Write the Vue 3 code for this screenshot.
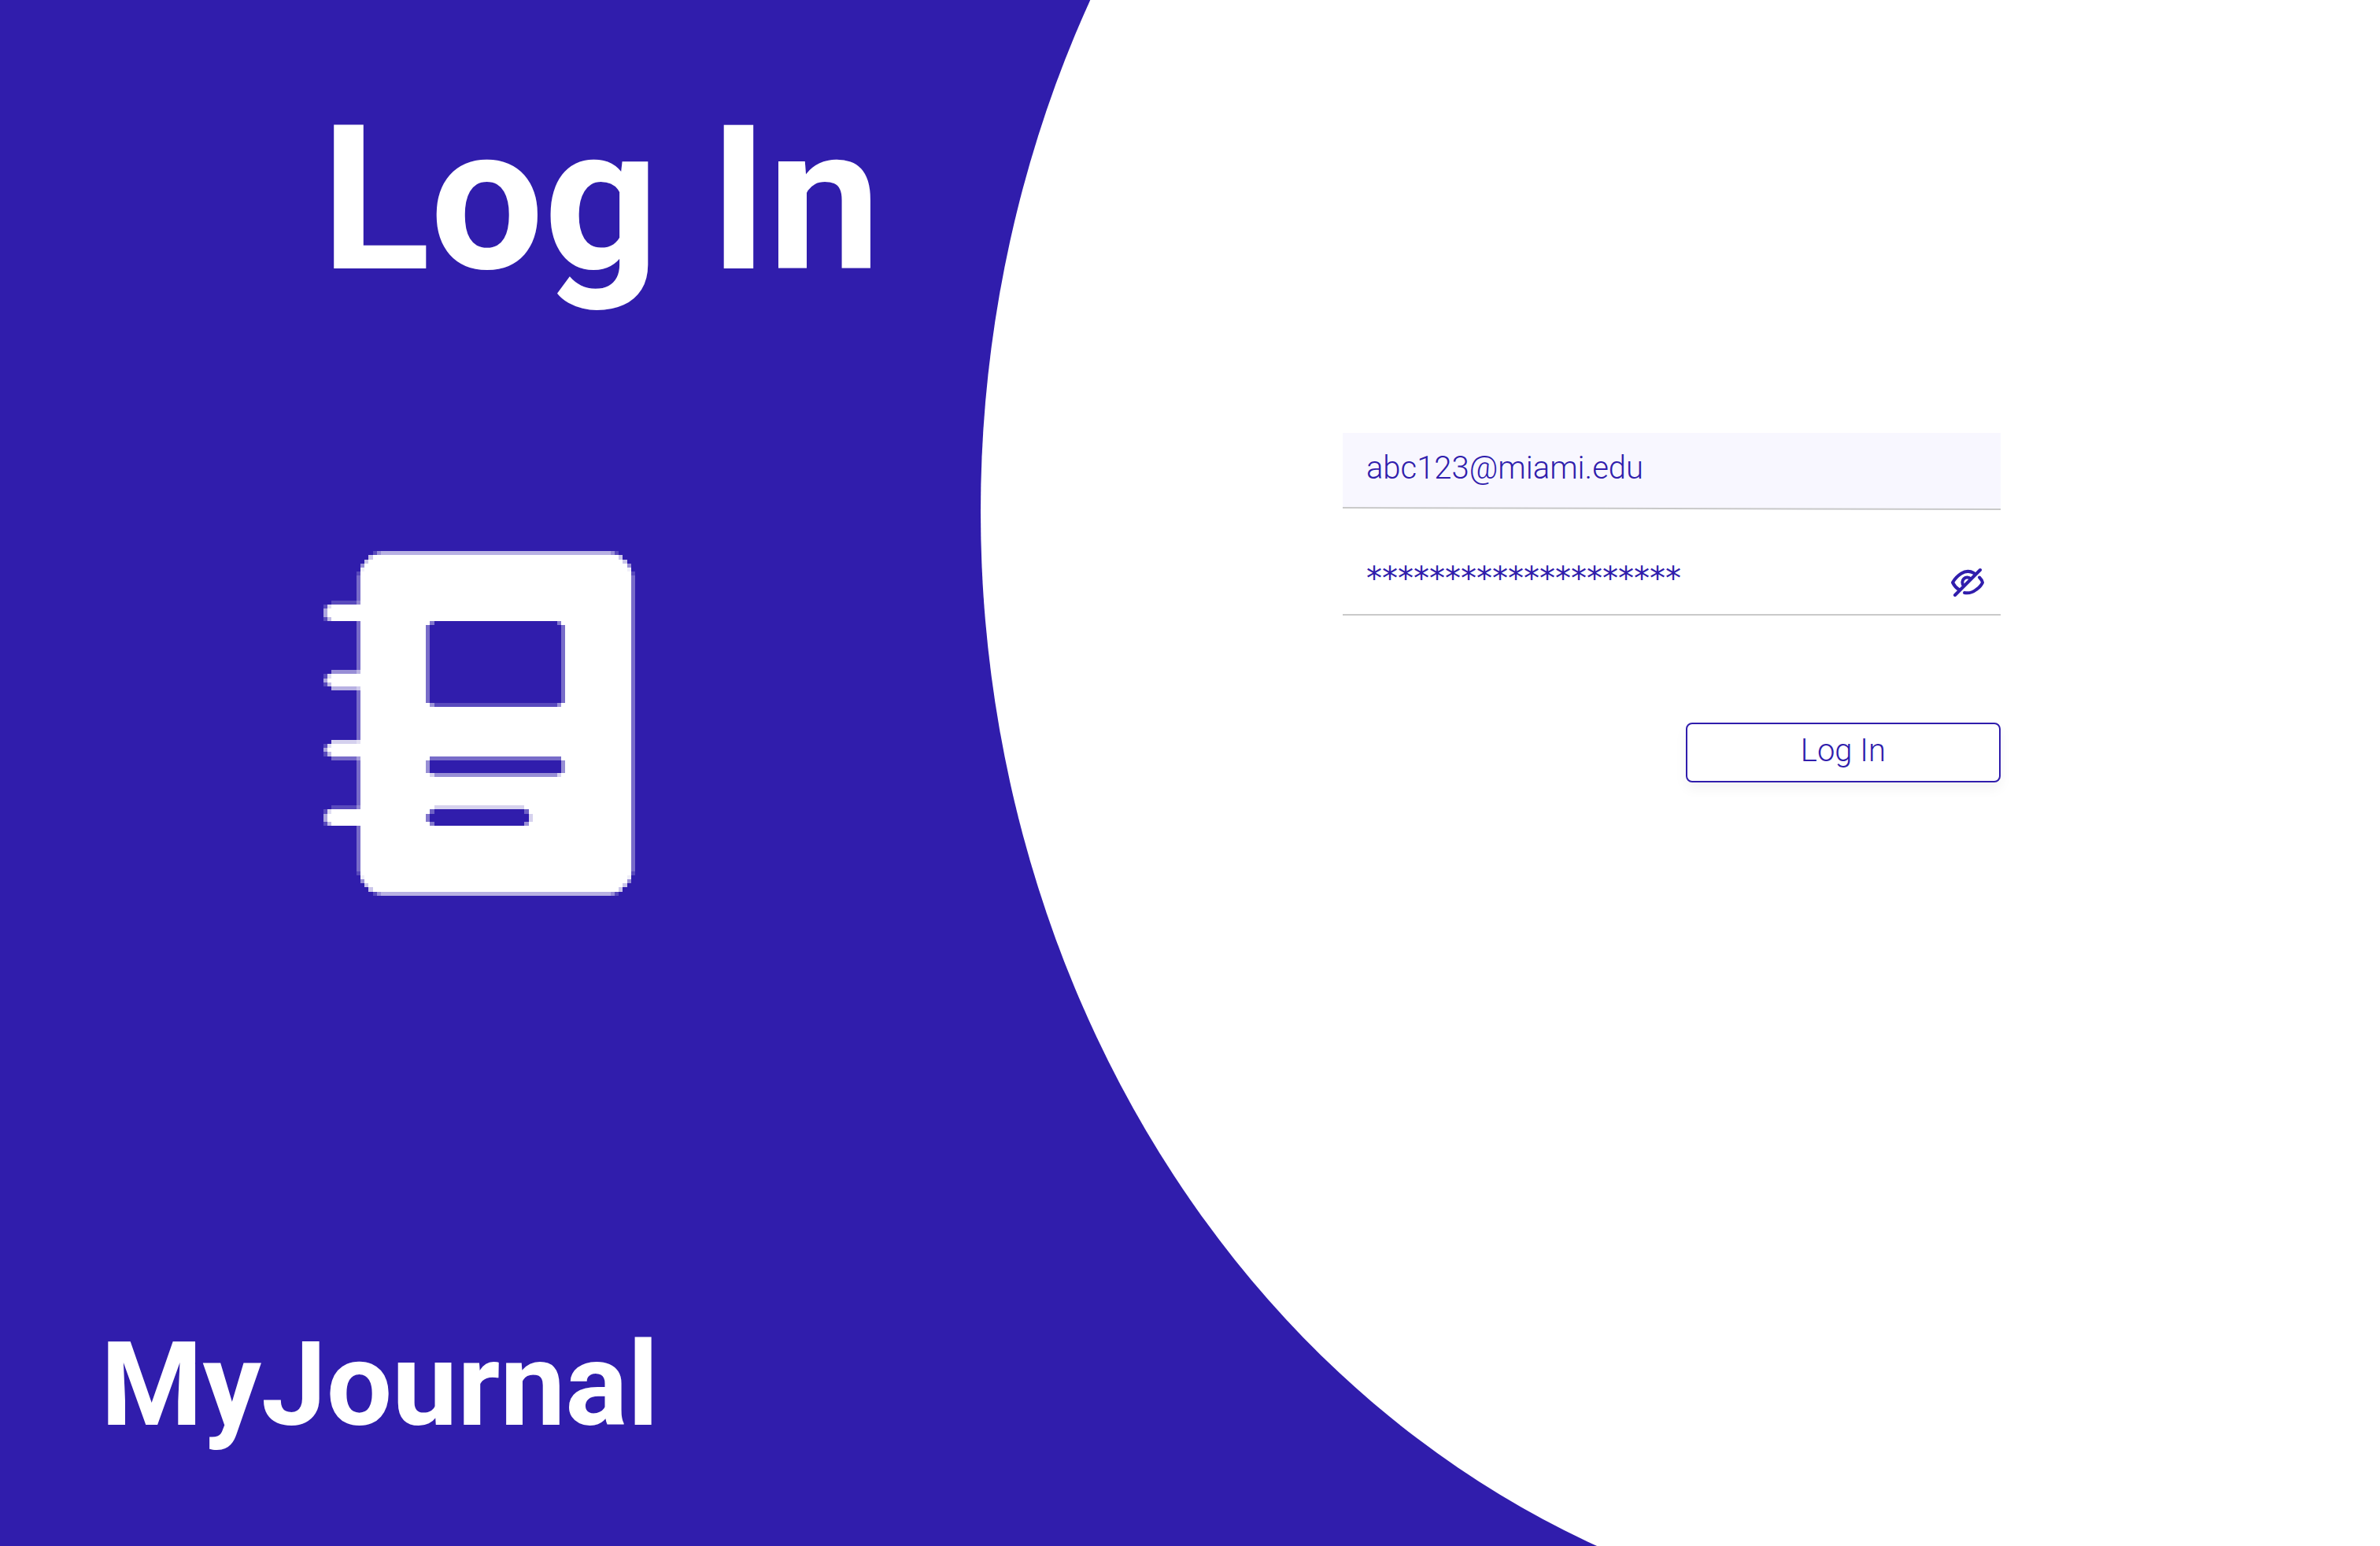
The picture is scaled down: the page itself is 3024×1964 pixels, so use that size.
<script setup>
import { ref } from 'vue'

const email = ref('abc123@miami.edu')
const password = ref('*'.repeat(20))

const WHITE = '#ffffff'
const BLUE = '#301dac'

// Spiral notebook on a 76 x 84 cell grid: [x, y, width, height, colour, opacity]
const cells = []
const put = (x, y, w, h, o = 1, c = WHITE) => cells.push([x, y, w, h, c, o])

// Cover
put(14, 0, 56, 1, 0.66)
put(14, 83, 56, 1, 0.66)
put(9, 5, 66, 74)
put(8, 6, 1, 72, 0.35)
put(75, 6, 1, 72, 0.35)

// Rounded corners of the cover, mirrored in both directions
const corner = [
  [13, 0, 1, 0.5], [12, 0, 1, 0.2],
  [12, 1, 30, 1], [11, 1, 1, 0.75],
  [11, 2, 31, 1], [10, 2, 1, 0.75],
  [10, 3, 32, 1], [9, 3, 1, 0.5],
  [10, 4, 32, 1], [9, 4, 1, 0.93],
  [8, 5, 1, 0.2],
]
for (const [x, y, w, o] of corner) {
  put(x, y, w, 1, o)
  put(84 - x - w, y, w, 1, o)
  put(x, 83 - y, w, 1, o)
  put(84 - x - w, 83 - y, w, 1, o)
}

// Rings: first row, opacity of first and last row, number of solid rows
for (const [y, top, bottom, rows] of [[12, 0.2, 0, 4], [29, 0.5, 0.66, 3], [46, 0.8, 0.35, 3], [62, 0.2, 0, 4]]) {
  put(2, y, 7, 1, top)
  put(2, y + 1, 7, rows)
  put(1, y + 1, 1, 1, 0.85)
  put(1, y + 2, 1, rows - 2)
  put(1, y + rows, 1, 1, 0.7)
  put(0, y + 1, 1, rows, 0.2)
  put(0, y + 2, 1, rows - 2, 0.5)
  if (bottom) put(2, y + 1 + rows, 7, 1, bottom)
}

// Picture and the two text lines
put(26, 17, 32, 20, 1, BLUE)
put(26, 17, 1, 1, 0.4)
put(57, 17, 1, 1, 0.4)
put(25, 18, 1, 19, 0.65, BLUE)
put(58, 18, 1, 19, 0.65, BLUE)
put(26, 37, 32, 1, 0.8, BLUE)
put(26, 37, 1, 1, 0.4)
put(57, 37, 1, 1, 0.4)
put(26, 50, 32, 1, 0.65, BLUE)
put(26, 51, 32, 3, 1, BLUE)
put(25, 51, 1, 3, 0.5, BLUE)
put(58, 51, 1, 3, 0.5, BLUE)
put(27, 54, 30, 1, 0.5, BLUE)
put(26, 54, 1, 1, 0.2, BLUE)
put(57, 54, 1, 1, 0.2, BLUE)
put(27, 62, 22, 1, 0.2, BLUE)
put(26, 63, 24, 4, 1, BLUE)
put(26, 63, 1, 1, 0.3)
put(26, 66, 1, 1, 0.4)
put(49, 63, 1, 1, 0.3)
put(49, 66, 1, 1, 0.5)
put(25, 64, 1, 2, 0.6, BLUE)
put(50, 64, 1, 2, 0.2, BLUE)
</script>

<template>
  <main class="page">
    <div class="disc" aria-hidden="true"></div>

    <section class="intro">
      <h1 class="title">Log In</h1>
      <svg class="notebook" viewBox="0 0 76 84" shape-rendering="crispEdges" aria-hidden="true">
        <rect
          v-for="([x, y, w, h, c, o], i) in cells"
          :key="i"
          :x="x"
          :y="y"
          :width="w"
          :height="h"
          :fill="c"
          :fill-opacity="o"
        />
      </svg>
      <p class="brand">MyJournal</p>
    </section>

    <form class="form" @submit.prevent>
      <div class="field filled">
        <div class="row">
          <input v-model="email" class="input" type="text" aria-label="Email" autocomplete="off" spellcheck="false" />
        </div>
        <svg class="rule" viewBox="0 0 836 4" preserveAspectRatio="none" aria-hidden="true">
          <path d="M0 4V2L836 4Z" fill="#ffffff" />
          <path d="M0 1L836 3" stroke="#c9c9c9" stroke-width="2" />
        </svg>
      </div>
      <div class="field">
        <div class="row">
          <input v-model="password" class="input secret" type="text" aria-label="Password" autocomplete="off" spellcheck="false" />
          <button class="toggle" type="button" aria-label="Show password">
            <svg class="eye" viewBox="0 0 44 38" aria-hidden="true">
              <path d="M30 8Q22 3.500 14 8.500Q7 13 3 20Q6 26 11 29" />
              <path d="M37 13.500Q40.500 17 41 20Q39 25 33 29Q26 34.500 18 33" />
              <path d="M26 15.500A6 6 0 0 0 17 24" />
              <path d="M6 36L38 4" />
            </svg>
          </button>
        </div>
        <svg class="rule" viewBox="0 0 836 4" preserveAspectRatio="none" aria-hidden="true">
          <path d="M0 3H836" stroke="#c9c9c9" stroke-width="2" />
        </svg>
      </div>
      <button class="submit" type="submit">Log In</button>
    </form>
  </main>
</template>

<style>
body {
  margin: 0;
}
</style>

<style scoped>
.page {
  position: relative;
  display: grid;
  grid-template-columns: 41.2% 1fr;
  min-height: 100vh;
  overflow: hidden;
  background: #301dac;
  font-family: Roboto, "Liberation Sans", sans-serif;
}

.disc {
  position: absolute;
  top: -39vh;
  left: 41.2%;
  right: 0;
  height: 144.2vh;
  border-radius: 70.2% 0 0 70.2% / 50% 0 0 50%;
  background: #ffffff;
}

.intro {
  position: relative;
  display: flex;
  flex-direction: column;
  align-items: flex-start;
  box-sizing: border-box;
  padding: 106px 0 120px 132px;
  color: #ffffff;
}

.title {
  margin: 0 0 0 276px;
  font-size: 256px;
  font-weight: 700;
  line-height: 296px;
  white-space: nowrap;
}

.notebook {
  width: 396px;
  height: 438px;
  margin: 298px 0 0 279px;
}

.brand {
  margin: auto 0 0 -4px;
  font-size: 148px;
  font-weight: 700;
  line-height: 168px;
}

.form {
  position: relative;
  display: flex;
  flex-direction: column;
  gap: 36px;
  width: 836px;
  padding-top: 550px;
  margin-left: 460px;
}

.field {
  display: flex;
  flex-direction: column;
}

.filled {
  background: #f8f7ff;
}

.row {
  display: flex;
  align-items: center;
}

.input {
  flex: 1;
  box-sizing: border-box;
  min-width: 0;
  height: 94px;
  padding: 0 30px 6px;
  border: 0;
  outline: 0;
  background: transparent;
  color: #301dac;
  font: 300 40px/48px Roboto, "Liberation Sans", sans-serif;
}

.secret {
  padding: 8px 30px 0;
  font-family: "DejaVu Sans", sans-serif;
  font-weight: 400;
}

.toggle {
  display: flex;
  padding: 16px 20px 0;
  border: 0;
  background: transparent;
}

.eye {
  width: 44px;
  height: 38px;
  fill: none;
  stroke: #301dac;
  stroke-width: 4;
  stroke-linecap: round;
  stroke-linejoin: round;
}

.rule {
  width: 100%;
  height: 4px;
  fill: none;
}

.submit {
  align-self: flex-end;
  width: 400px;
  height: 76px;
  margin-top: 100px;
  padding: 0 0 4px;
  border: 2px solid #301dac;
  border-radius: 8px;
  background: #ffffff;
  box-shadow: 0 8px 16px rgba(0, 0, 0, 0.05);
  color: #301dac;
  font: 300 40px/48px Roboto, "Liberation Sans", sans-serif;
}
</style>
